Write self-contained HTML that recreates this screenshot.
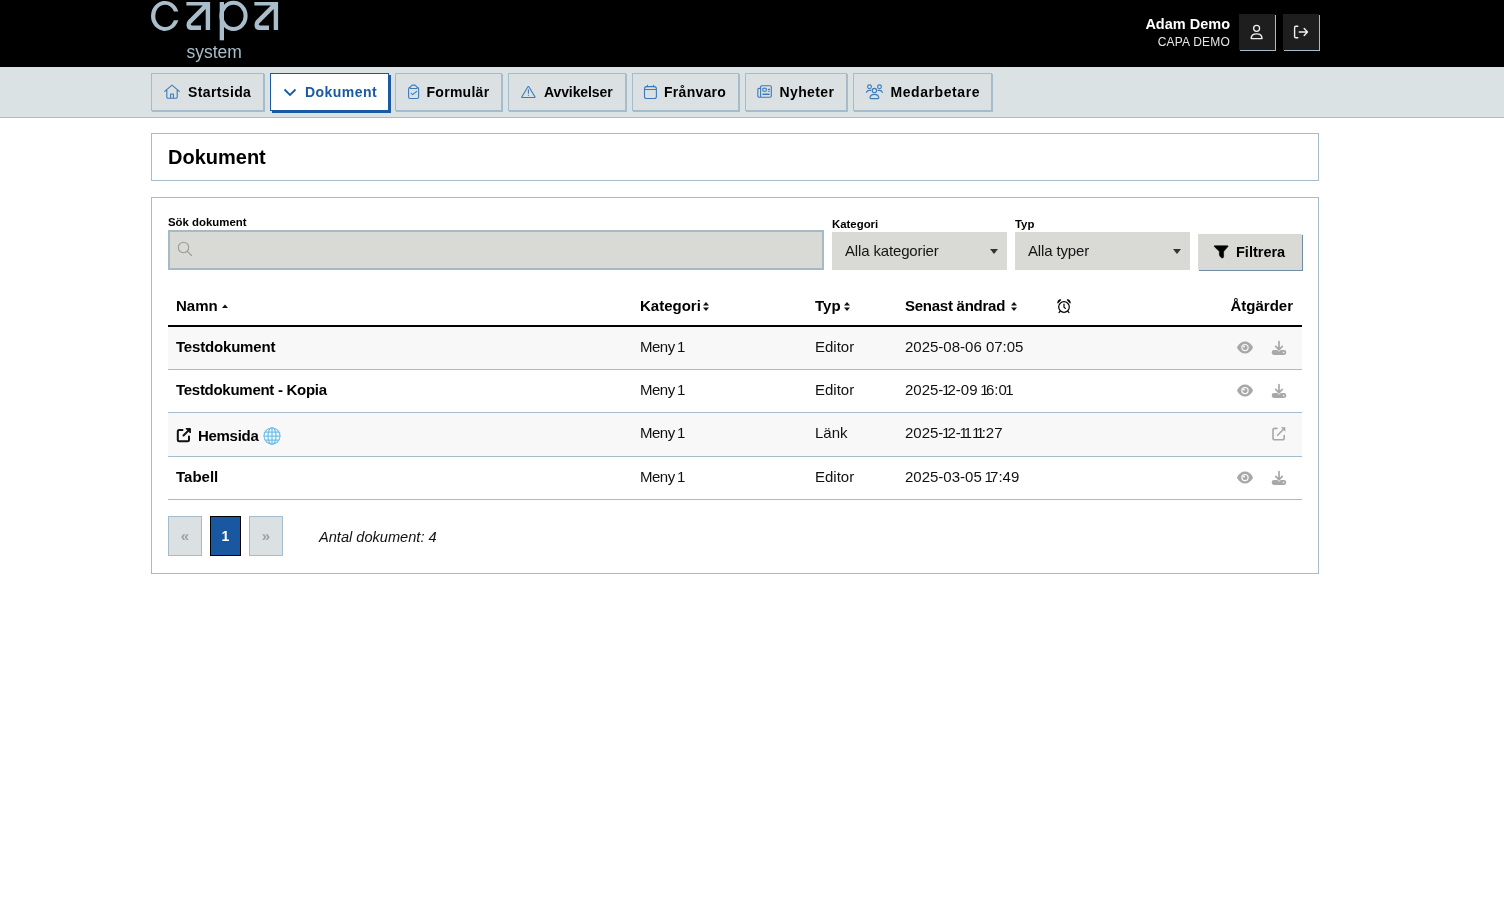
<!DOCTYPE html>
<html lang="sv">
<head>
<meta charset="utf-8">
<title>Dokument - CAPA</title>
<style>
*{box-sizing:border-box;margin:0;padding:0}
html,body{width:1504px;height:920px;overflow:hidden;font-family:"Liberation Sans",sans-serif;color:#000}
.a{position:absolute}
.t{position:absolute;white-space:nowrap;line-height:20px}
#hdr{left:0;top:0;width:1504px;height:67px;background:#000}
#nav{left:0;top:67px;width:1504px;height:51px;background:#dbe2e3;border-bottom:1px solid #a7bccb}
.nb{position:absolute;top:73px;height:38px;background:#dbe1e2;border:1px solid #a7bccb;box-shadow:1px 1px 0 #a7bccb}
.nb.act{background:#fff;border-color:#1b5aa3;box-shadow:2px 2px 0 #1b5aa3}
.nb svg{position:absolute;left:12px;top:10px}
.nb span{position:absolute;left:36px;top:8px;font-size:14px;font-weight:bold;line-height:20px;white-space:nowrap}
.nb.act span{color:#1b5aa3}
.card{position:absolute;left:151px;width:1168px;border:1px solid #a7bccb;background:#fff}
.lbl{font-size:11.4px;font-weight:bold}
.sel{position:absolute;top:232px;height:38px;width:175px;background:#d9dad6}
.sel span{position:absolute;left:13px;top:9px;font-size:15px;line-height:20px;color:#151515;letter-spacing:-0.15px;white-space:nowrap}
.sel i{position:absolute;right:9px;top:17px;width:0;height:0;border-left:4px solid transparent;border-right:4px solid transparent;border-top:5px solid #333}
.th{font-size:15px;font-weight:bold}
.td{font-size:15px;color:#111}
.tdb{font-size:15px;font-weight:bold}
.row{position:absolute;left:168px;width:1134px;border-bottom:1px solid #a7bccb}
.gray{fill:#a8a8a8}
.n1{margin-left:-1.4px;letter-spacing:-2.8px}
</style>
</head>
<body><div style="position:absolute;left:0;top:0;width:1504px;height:920px;will-change:transform;background:#fff">
<div id="hdr" class="a"></div>
<svg class="a" style="left:0;top:0" width="300" height="67" viewBox="0 0 300 67">
  <g fill="#a9bdca">
    <path transform="translate(0.4,0)" d="M177.98 11.5 A14 15 0 1 0 177.98 20.3 L173.5 20.3 A9.7 11.2 0 1 1 173.5 11.5 Z"/>
    <path id="la" d="M186.4,2 H210.1 V29.9 H205.7 V9.05 L191.2,23.55 Q190,25.4 192.3,25.4 H201 V29.9 H190.5 C185.8,29.9 185.5,23 188.4,20 L202.8,5.6 H186.4 Z"/>
    <path transform="translate(68,0)" d="M186.4,2 H210.1 V29.9 H205.7 V9.05 L191.2,23.55 Q190,25.4 192.3,25.4 H201 V29.9 H190.5 C185.8,29.9 185.5,23 188.4,20 L202.8,5.6 H186.4 Z"/>
    <rect x="219.7" y="2" width="4.3" height="38.3"/>
  </g>
  <ellipse cx="233.5" cy="15.95" rx="12.1" ry="13.1" fill="none" stroke="#a9bdca" stroke-width="4"/>
  <text x="186.5" y="57.7" font-family="Liberation Sans" font-size="17.5" fill="#a9bdca">system</text>
</svg>

<div class="t" style="right:274px;top:14px;font-size:14.5px;font-weight:bold;color:#fff">Adam Demo</div>
<div class="t" style="right:274px;top:32px;font-size:12px;letter-spacing:0.2px;color:#e6e6e6">CAPA DEMO</div>
<div class="a" style="left:1239px;top:14px;width:36px;height:36px;background:#1e1e1e;box-shadow:1px 1px 0 #a7bccb"></div>
<svg class="a" style="left:1239px;top:14px" width="36" height="36" viewBox="0 0 36 36">
  <circle cx="17.6" cy="14.3" r="3.0" fill="none" stroke="#f0f0f0" stroke-width="1.3"/>
  <path d="M12.2 24.6 C12.2 21.2 14.4 19.9 17.6 19.9 C20.8 19.9 23 21.2 23 24.6 Z" fill="none" stroke="#f0f0f0" stroke-width="1.4" stroke-linejoin="round"/>
</svg>
<div class="a" style="left:1283px;top:14px;width:36px;height:36px;background:#1e1e1e;box-shadow:1px 1px 0 #a7bccb"></div>
<svg class="a" style="left:1283px;top:14px" width="36" height="36" viewBox="0 0 36 36">
  <path d="M14.8 12.2 H12.9 Q11.6 12.2 11.6 13.5 V22.4 Q11.6 23.7 12.9 23.7 H14.8" fill="none" stroke="#f0f0f0" stroke-width="1.4" stroke-linecap="round"/>
  <path d="M16.2 18 H24.5 M21.2 14.6 L24.5 18 L21.2 21.4" fill="none" stroke="#f0f0f0" stroke-width="1.4" stroke-linecap="round" stroke-linejoin="round"/>
</svg>

<div id="nav" class="a"></div>
<div class="nb" style="left:151px;width:113px">
  <svg width="16" height="16" viewBox="0 0 16 16"><path d="M0.7 7.4 L8 1.2 L15.3 7.4 M2.8 5.8 V13 Q2.8 14.3 4.1 14.3 H11.9 Q13.2 14.3 13.2 13 V5.8 M6.6 14.3 V10 H9.4 V14.3" fill="none" stroke="#3d7ab9" stroke-width="1.1" stroke-linejoin="round" stroke-linecap="round"/></svg>
  <span style="left:36px;letter-spacing:0.37px">Startsida</span>
</div>
<div class="nb act" style="left:270px;width:119px">
  <svg style="left:11px" width="16" height="16" viewBox="0 0 16 16"><path d="M2.5 5.5 L8 11 L13.5 5.5" fill="none" stroke="#1b5aa3" stroke-width="1.8"/></svg>
  <span style="left:34px;letter-spacing:0.45px">Dokument</span>
</div>
<div class="nb" style="left:395px;width:107px">
  <svg style="left:10px" width="16" height="16" viewBox="0 0 16 16"><g fill="none" stroke="#3d7ab9" stroke-width="1.1" stroke-linejoin="round" stroke-linecap="round"><path d="M3.6 3.5 H4 M11.2 3.5 H11.6 M3.6 3.5 Q2.6 3.5 2.6 5 V13 Q2.6 14.5 4.1 14.5 H11.1 Q12.6 14.5 12.6 13 V5 Q12.6 3.5 11.6 3.5"/><path d="M3.5 3.6 L6.2 1.1 H9 L11.7 3.6 L10.9 4.5 H4.3 Z"/><path d="M5.2 9.3 L6.7 10.6 L10.6 7.3"/></g></svg>
  <span style="left:30.5px;letter-spacing:0.28px">Formulär</span>
</div>
<div class="nb" style="left:508px;width:118px">
  <svg style="left:11px" width="16" height="16" viewBox="0 0 16 16"><path d="M7.6 3.2 Q8.4 1.9 9.2 3.2 L14.9 12.7 Q15.3 13.5 14.5 13.5 H2.3 Q1.5 13.5 1.9 12.7 Z M8.4 5.8 V9.2 M8.4 11.4 V11.5" fill="none" stroke="#3d7ab9" stroke-width="1.1" stroke-linejoin="round" stroke-linecap="round"/></svg>
  <span style="left:35px;letter-spacing:-0.1px">Avvikelser</span>
</div>
<div class="nb" style="left:632px;width:107px">
  <svg style="left:10px" width="16" height="16" viewBox="0 0 16 16"><g fill="none" stroke="#3d7ab9" stroke-width="1.1" stroke-linejoin="round" stroke-linecap="round"><path d="M3.5 2.6 H11.3 Q13.4 2.6 13.4 4.7 V12.4 Q13.4 14.5 11.3 14.5 H3.6 Q1.5 14.5 1.5 12.4 V4.7 Q1.5 2.6 3.5 2.6 Z M1.5 5.5 H13.4"/><path d="M4.4 1.3 V2.6 M10.5 1.3 V2.6" stroke-width="1.2"/></g></svg>
  <span style="left:31px;letter-spacing:0.28px">Frånvaro</span>
</div>
<div class="nb" style="left:745px;width:102px">
  <svg style="left:11px" width="16" height="16" viewBox="0 0 16 16"><g fill="none" stroke="#3d7ab9" stroke-width="1.1" stroke-linejoin="round" stroke-linecap="round"><path d="M4.8 1.8 H13.1 Q14.3 1.8 14.3 3 V12 Q14.3 13.2 13.1 13.2 H2.2 Q0.85 13.2 0.85 11.8 V5.4 Q0.85 4.4 1.6 4.4 H3.6 M3.6 13.2 V3 Q3.6 1.8 4.8 1.8"/><rect x="5.85" y="4.25" width="3.4" height="3" rx="0.5"/><path d="M11.3 5.4 H12.5 M11.3 7.3 H12.5"/><path d="M6 10.3 H12" stroke-width="1.6"/></g></svg>
  <span style="left:33.5px;letter-spacing:0.38px">Nyheter</span>
</div>
<div class="nb" style="left:853px;width:139px">
  <svg style="left:12px;top:10px" width="18" height="16" viewBox="0 0 18 16"><g fill="none" stroke="#3d7ab9" stroke-width="1.15" stroke-linecap="round" stroke-linejoin="round"><circle cx="3.5" cy="2.8" r="1.9"/><circle cx="13.5" cy="2.8" r="1.9"/><circle cx="8.4" cy="6.5" r="2.2"/><path d="M0.4 8.4 Q1 6.4 3.3 6.4 H4.7 M16.4 8.4 Q15.8 6.4 13.5 6.4 H12.1"/><path d="M4 13.6 Q4.6 10.4 8.4 10.4 Q12.2 10.4 12.8 13.6 Q12.9 14.6 11.8 14.6 H5 Q3.9 14.6 4 13.6 Z"/></g></svg>
  <span style="left:36.5px;letter-spacing:0.57px">Medarbetare</span>
</div>

<!-- title card -->
<div class="card" style="top:133px;height:48px"></div>
<div class="t" style="left:168px;top:145.5px;font-size:20px;font-weight:bold;line-height:22px">Dokument</div>

<!-- main card -->
<div class="card" style="top:197px;height:377px"></div>
<div class="t lbl" style="left:168px;top:215px;line-height:14px">Sök dokument</div>
<div class="a" style="left:168px;top:230px;width:656px;height:40px;background:#d9dad6;border:2px solid #a6b9c7"></div>
<svg class="a" style="left:176px;top:240px" width="20" height="20" viewBox="0 0 20 20"><circle cx="7.5" cy="7.5" r="5.2" fill="none" stroke="#9a9a9a" stroke-width="1.1"/><path d="M11.3 11.3 L15.5 15.5" stroke="#9a9a9a" stroke-width="1.1" stroke-linecap="round"/></svg>

<div class="t lbl" style="left:832px;top:217px;line-height:14px">Kategori</div>
<div class="sel" style="left:832px"><span>Alla kategorier</span><i></i></div>
<div class="t lbl" style="left:1015px;top:217px;line-height:14px">Typ</div>
<div class="sel" style="left:1015px"><span>Alla typer</span><i></i></div>

<div class="a" style="left:1198px;top:234px;width:104px;height:36px;background:#d9dad6;box-shadow:1px 1px 0 #6f8ea6"></div>
<svg class="a" style="left:1212px;top:244px" width="18" height="16" viewBox="0 0 18 16"><path d="M2.6 1.8 H15.6 Q16.4 1.8 15.9 2.6 L11.6 7.6 V12.6 Q11.6 13.9 10.4 13.9 Q9.4 13.9 8.6 13 Q7.4 11.8 7.4 10.6 V7.6 L2.3 2.6 Q1.8 1.8 2.6 1.8 Z" fill="#000" stroke="#000" stroke-width="0.6" stroke-linejoin="round"/></svg>
<div class="t" style="left:1236px;top:242px;font-size:14.5px;font-weight:bold">Filtrera</div>

<!-- table header -->
<div class="t th" style="left:176px;top:295.5px">Namn</div>
<svg class="a" style="left:221px;top:303px" width="8" height="6" viewBox="0 0 8 6"><path d="M1 5 L4 1.5 L7 5 Z" fill="#111"/></svg>
<div class="t th" style="left:640px;top:295.5px">Kategori</div>
<svg class="a" style="left:702px;top:301px" width="8" height="11" viewBox="0 0 8 11"><path d="M1 4.6 L4 1 L7 4.6 Z M1 6.4 L4 10 L7 6.4 Z" fill="#111"/></svg>
<div class="t th" style="left:815px;top:295.5px">Typ</div>
<svg class="a" style="left:843px;top:301px" width="8" height="11" viewBox="0 0 8 11"><path d="M1 4.6 L4 1 L7 4.6 Z M1 6.4 L4 10 L7 6.4 Z" fill="#111"/></svg>
<div class="t th" style="left:905px;top:295.5px;letter-spacing:-0.25px">Senast ändrad</div>
<svg class="a" style="left:1009.5px;top:301px" width="8" height="11" viewBox="0 0 8 11"><path d="M1 4.6 L4 1 L7 4.6 Z M1 6.4 L4 10 L7 6.4 Z" fill="#111"/></svg>
<svg class="a" style="left:1056px;top:298px" width="16" height="16" viewBox="0 0 16 16"><circle cx="8" cy="9" r="5.3" fill="none" stroke="#000" stroke-width="1.2"/><path d="M8 6 V9.2 L9.4 10.4" fill="none" stroke="#000" stroke-width="1.2" stroke-linecap="round"/><path d="M1.8 4.8 Q2.2 2 4.6 1.8 Z M14.2 4.8 Q13.8 2 11.4 1.8 Z" fill="#000" stroke="#000" stroke-width="1.1" stroke-linejoin="round"/><path d="M4.2 13.2 L3 14.6 M11.8 13.2 L13 14.6" stroke="#000" stroke-width="1.2" stroke-linecap="round"/></svg>
<div class="t th" style="right:211px;top:295.5px">Åtgärder</div>
<div class="a" style="left:168px;top:325px;width:1134px;height:2px;background:#000"></div>

<!-- rows -->
<div class="row" style="top:327px;height:43px;background:#f8f8f8"></div>
<div class="row" style="top:370px;height:43px;background:#fff"></div>
<div class="row" style="top:413px;height:44px;background:#f8f8f8"></div>
<div class="row" style="top:457px;height:43px;background:#fff"></div>

<div class="t tdb" style="left:176px;top:336.5px;letter-spacing:-0.18px">Testdokument</div>
<div class="t td" style="left:640px;top:336.5px;letter-spacing:-0.5px">Meny <span class="n1">1</span></div>
<div class="t td" style="left:815px;top:336.5px">Editor</div>
<div class="t td" style="left:905px;top:336.5px">2025-08-06 07:05</div>

<div class="t tdb" style="left:176px;top:379.5px;letter-spacing:-0.28px">Testdokument - Kopia</div>
<div class="t td" style="left:640px;top:379.5px;letter-spacing:-0.5px">Meny <span class="n1">1</span></div>
<div class="t td" style="left:815px;top:379.5px">Editor</div>
<div class="t td" style="left:905px;top:379.5px">2025-<span class="n1">1</span>2-09 <span class="n1">1</span>6:0<span class="n1">1</span></div>

<svg class="a" style="left:176px;top:427px" width="16" height="16" viewBox="0 0 16 16"><path d="M6.5 3 H3.3 Q1.8 3 1.8 4.5 V12.7 Q1.8 14.2 3.3 14.2 H11.5 Q13 14.2 13 12.7 V9.5 M7.5 8.5 L13.6 2.4" fill="none" stroke="#111" stroke-width="2" stroke-linecap="round" stroke-linejoin="round"/><path d="M10 1.6 H14.4 V6 Z" fill="#111" stroke="#111" stroke-width="1" stroke-linejoin="round"/></svg>
<div class="t tdb" style="left:198px;top:426px;letter-spacing:-0.3px">Hemsida</div>
<svg class="a" style="left:263px;top:427px" width="18" height="18" viewBox="0 0 18 18"><defs><clipPath id="gc"><circle cx="9" cy="9" r="8.7"/></clipPath></defs><circle cx="9" cy="9" r="8.7" fill="#f2f9fd"/><g clip-path="url(#gc)" fill="none" stroke="#74bfe3" stroke-width="1.25"><circle cx="9" cy="9" r="8.1"/><ellipse cx="9" cy="9" rx="4" ry="8.6"/><path d="M9 0 V18 M0 9 H18 M0 5 H18 M0 13 H18"/></g></svg>
<div class="t td" style="left:640px;top:422.5px;letter-spacing:-0.5px">Meny <span class="n1">1</span></div>
<div class="t td" style="left:815px;top:422.5px">Länk</div>
<div class="t td" style="left:905px;top:422.5px">2025-<span class="n1">1</span>2-<span class="n1">1</span><span class="n1">1</span> <span class="n1">1</span><span class="n1">1</span>:27</div>

<div class="t tdb" style="left:176px;top:466.5px">Tabell</div>
<div class="t td" style="left:640px;top:466.5px;letter-spacing:-0.5px">Meny <span class="n1">1</span></div>
<div class="t td" style="left:815px;top:466.5px">Editor</div>
<div class="t td" style="left:905px;top:466.5px">2025-03-05 <span class="n1">1</span>7:49</div>

<!-- action icons -->
<svg class="a" style="left:1236px;top:341px" width="18" height="14" viewBox="0 0 18 14"><path d="M0.9 6.6 C3 2.4 5.8 0.6 9 0.6 C12.2 0.6 15 2.4 17.1 6.6 C15 10.8 12.2 12.6 9 12.6 C5.8 12.6 3 10.8 0.9 6.6 Z" class="gray"/><circle cx="9" cy="6.6" r="3.7" fill="#f8f8f8"/><circle cx="9" cy="6.6" r="2.5" class="gray"/><circle cx="8" cy="5.6" r="1" fill="#f8f8f8"/></svg><svg class="a" style="left:1271px;top:340px" width="16" height="16" viewBox="0 0 16 16"><path d="M8 1.5 V9.6 M4.7 6.4 L8 9.7 L11.3 6.4" fill="none" stroke="#a8a8a8" stroke-width="1.7" stroke-linecap="round"/><path d="M3 10.1 H6.2 L8 11.7 L9.8 10.1 H13 Q15.3 10.1 15.3 12.5 Q15.3 14.9 13 14.9 H3 Q0.7 14.9 0.7 12.5 Q0.7 10.1 3 10.1 Z" class="gray"/><circle cx="12.6" cy="12.5" r="0.8" fill="#f8f8f8"/></svg>
<svg class="a" style="left:1236px;top:384px" width="18" height="14" viewBox="0 0 18 14"><path d="M0.9 6.6 C3 2.4 5.8 0.6 9 0.6 C12.2 0.6 15 2.4 17.1 6.6 C15 10.8 12.2 12.6 9 12.6 C5.8 12.6 3 10.8 0.9 6.6 Z" class="gray"/><circle cx="9" cy="6.6" r="3.7" fill="#fff"/><circle cx="9" cy="6.6" r="2.5" class="gray"/><circle cx="8" cy="5.6" r="1" fill="#fff"/></svg><svg class="a" style="left:1271px;top:383px" width="16" height="16" viewBox="0 0 16 16"><path d="M8 1.5 V9.6 M4.7 6.4 L8 9.7 L11.3 6.4" fill="none" stroke="#a8a8a8" stroke-width="1.7" stroke-linecap="round"/><path d="M3 10.1 H6.2 L8 11.7 L9.8 10.1 H13 Q15.3 10.1 15.3 12.5 Q15.3 14.9 13 14.9 H3 Q0.7 14.9 0.7 12.5 Q0.7 10.1 3 10.1 Z" class="gray"/><circle cx="12.6" cy="12.5" r="0.8" fill="#fff"/></svg>
<svg class="a" style="left:1271px;top:426px" width="16" height="16" viewBox="0 0 16 16"><path d="M6 2.4 H3.8 Q2 2.4 2 4.2 V12 Q2 13.8 3.8 13.8 H11.4 Q13.2 13.8 13.2 12 V9.6 M6.6 9.2 L13 2.8" fill="none" stroke="#a8a8a8" stroke-width="1.6" stroke-linecap="round"/><path d="M9.8 1.2 H14.4 V5.8 Z" class="gray"/></svg>
<svg class="a" style="left:1236px;top:471px" width="18" height="14" viewBox="0 0 18 14"><path d="M0.9 6.6 C3 2.4 5.8 0.6 9 0.6 C12.2 0.6 15 2.4 17.1 6.6 C15 10.8 12.2 12.6 9 12.6 C5.8 12.6 3 10.8 0.9 6.6 Z" class="gray"/><circle cx="9" cy="6.6" r="3.7" fill="#fff"/><circle cx="9" cy="6.6" r="2.5" class="gray"/><circle cx="8" cy="5.6" r="1" fill="#fff"/></svg><svg class="a" style="left:1271px;top:470px" width="16" height="16" viewBox="0 0 16 16"><path d="M8 1.5 V9.6 M4.7 6.4 L8 9.7 L11.3 6.4" fill="none" stroke="#a8a8a8" stroke-width="1.7" stroke-linecap="round"/><path d="M3 10.1 H6.2 L8 11.7 L9.8 10.1 H13 Q15.3 10.1 15.3 12.5 Q15.3 14.9 13 14.9 H3 Q0.7 14.9 0.7 12.5 Q0.7 10.1 3 10.1 Z" class="gray"/><circle cx="12.6" cy="12.5" r="0.8" fill="#fff"/></svg>

<!-- pagination -->
<div class="a" style="left:168px;top:516px;width:34px;height:40px;background:#dbe1e3;border:1px solid #a7bccb"></div>
<div class="t" style="left:168px;top:526px;width:34px;text-align:center;font-size:15px;font-weight:bold;color:#a0a0a0">«</div>
<div class="a" style="left:210px;top:516px;width:31px;height:40px;background:#1957a0;border:1px solid #000"></div>
<div class="t" style="left:210px;top:526px;width:31px;text-align:center;font-size:14px;font-weight:bold;color:#fff">1</div>
<div class="a" style="left:249px;top:516px;width:34px;height:40px;background:#dbe1e3;border:1px solid #a7bccb"></div>
<div class="t" style="left:249px;top:526px;width:34px;text-align:center;font-size:15px;font-weight:bold;color:#a0a0a0">»</div>
<div class="t" style="left:319px;top:527px;font-size:14.6px;font-style:italic;color:#111">Antal dokument: 4</div>
</div></body>
</html>
